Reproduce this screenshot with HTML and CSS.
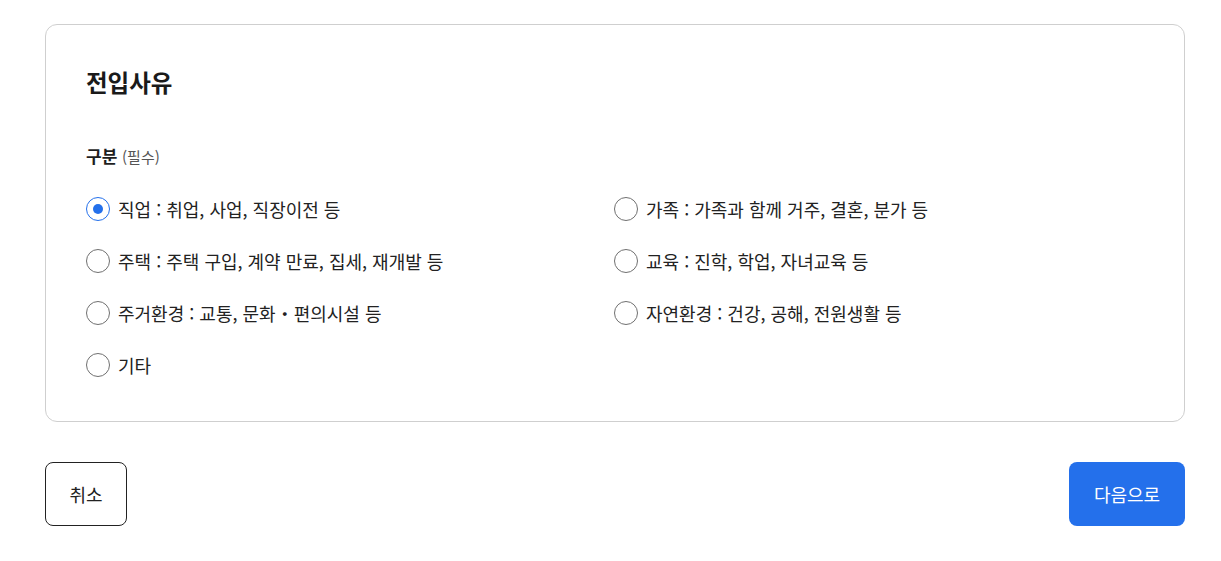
FILE: index.html
```html
<!DOCTYPE html>
<html lang="ko">
<head>
<meta charset="utf-8">
<link rel="stylesheet" href="styles.css">
</head>
<body>
<div class="page">
  <section class="card">
    <h2 class="title">전입사유</h2>
    <div class="label">구분 <span class="req">(필수)</span></div>
    <div class="options">
      <label class="opt"><span class="radio checked"></span>직업 : 취업, 사업, 직장이전 등</label>
      <label class="opt"><span class="radio"></span>가족 : 가족과 함께 거주, 결혼, 분가 등</label>
      <label class="opt"><span class="radio"></span>주택 : 주택 구입, 계약 만료, 집세, 재개발 등</label>
      <label class="opt"><span class="radio"></span>교육 : 진학, 학업, 자녀교육 등</label>
      <label class="opt"><span class="radio"></span>주거환경 : 교통, 문화・편의시설 등</label>
      <label class="opt"><span class="radio"></span>자연환경 : 건강, 공해, 전원생활 등</label>
      <label class="opt"><span class="radio"></span>기타</label>
    </div>
  </section>
  <div class="actions">
    <button class="btn btn-cancel">취소</button>
    <button class="btn btn-next">다음으로</button>
  </div>
</div>
</body>
</html>
```
FILE: styles.css
```css
* { box-sizing: border-box; }
body {
  margin: 0;
  background: #fff;
  font-family: "Noto Sans CJK KR", "Noto Sans", sans-serif;
  color: #1e1e1e;
}
.page {
  margin: 24px 36px 0 45px;
}
.card {
  border: 1px solid #cfcfcf;
  border-radius: 12px;
  padding: 39px 40px 40px 40px;
}
.title {
  margin: 0;
  font-size: 23.5px;
  font-weight: 700;
  line-height: 36px;
  color: #1a1a1a;
}
.label {
  margin-top: 44px;
  font-size: 17px;
  font-weight: 700;
  line-height: 24px;
}
.req {
  font-size: 15px;
  font-weight: 400;
  color: #555;
}
.options {
  margin-top: 24px;
  display: grid;
  grid-template-columns: 528px 1fr;
  row-gap: 20px;
}
.opt {
  display: flex;
  align-items: center;
  gap: 8px;
  height: 32px;
  font-size: 18px;
  color: #222;
}
.radio {
  width: 24px;
  height: 24px;
  border: 1.5px solid #707070;
  border-radius: 50%;
  flex: none;
  display: flex;
  align-items: center;
  justify-content: center;
}
.radio.checked {
  border-color: #2470eb;
}
.radio.checked::after {
  content: "";
  width: 10px;
  height: 10px;
  border-radius: 50%;
  background: #2470eb;
}
.actions {
  margin-top: 40px;
  display: flex;
  justify-content: space-between;
}
.btn {
  height: 64px;
  border-radius: 8px;
  font-family: inherit;
  font-size: 18px;
  cursor: pointer;
}
.btn-cancel {
  width: 82px;
  background: #fff;
  border: 1px solid #222;
  color: #222;
}
.btn-next {
  width: 116px;
  background: #2470eb;
  border: none;
  color: #fff;
}
```
